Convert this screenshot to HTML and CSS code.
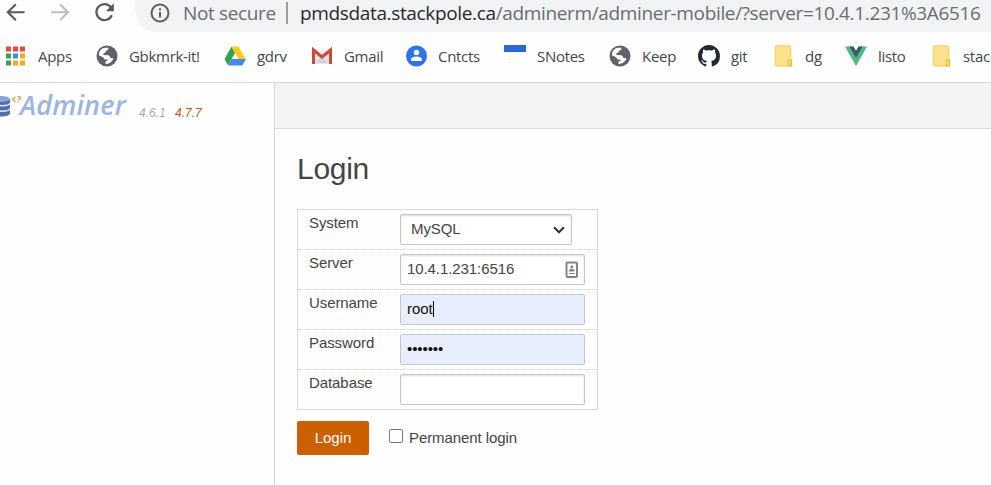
FILE: index.html
```html
<!DOCTYPE html>
<html lang="en">
<head>
<meta charset="utf-8">
<title>Login - Adminer</title>
<link rel="stylesheet" href="styles.css">
</head>
<body>
<svg width="0" height="0" class="defs">
  <symbol id="globe" viewBox="0 0 22 22"><circle cx="11" cy="11" r="10.500" fill="#5f6368"/><path d="M3 10.500C2.500 6.500 5.500 3.300 9 2.800L12.500 2.800C12.500 5 11.500 5.600 10 5.800C10 7.600 9 8 7.400 8.200L7.400 10L12.500 10.200C14 10.800 14 12 14.500 13L17.500 13.300C16.200 17 13 19.300 9.500 18.900L9.500 16.500L12 15.500C11 14.300 10 14.500 8.500 14.500C7.500 12.300 6.500 11.700 3 10.500Z" fill="#fff"/></symbol>
  <symbol id="folder" viewBox="0 0 22 22"><path d="M2.500 .8H15Q16.800 .8 16.800 2.500V14L17.800 15V21H2.500Q1.300 21 1.300 19.800V2Q1.300 .8 2.500 .8Z" fill="#fce28a" stroke="#efcf60"/><path d="M14.300 21V15H17.500V21Z" fill="#fbdc6c" stroke="#e3bc36"/></symbol>
</svg>
<header class="toolbar">
  <svg class="nav" viewBox="0 0 125 32" fill="none" stroke-width="2">
    <path d="M24.500 12.300H8M15.800 4.300L7.800 12.300L15.800 20.300" stroke="#55585c"/>
    <path d="M51 12.300H67.500M60 4.300L68 12.300L60 20.300" stroke="#bcbec0"/>
    <path d="M111 7.500A8 8 0 1 0 111.800 15.200" stroke="#55585c" stroke-width="2.200"/><path d="M113.800 3.300V11.200H106Z" fill="#55585c"/>
  </svg>
  <div class="address">
    <svg width="20" height="20" viewBox="0 0 20 20"><circle cx="10" cy="10" r="8.500" fill="none" stroke="#5f6368" stroke-width="2"/><path d="M10 9V14.500M10 5.300V7.400" stroke="#5f6368" stroke-width="2"/></svg>
    <span class="insecure">Not secure</span><i class="sep"></i>
    <span class="url"><b>pmdsdata.stackpole.ca</b>/adminerm/adminer-mobile/?server=10.4.1.231%3A6516</span>
  </div>
</header>
<nav class="bookmarks">
  <a><svg viewBox="0 0 22 22"><path d="M1 1.500h5v5H1zM8 1.500h5v5H8zM15 1.500h5v5h-5z" fill="#df4b3e"/><path d="M1 8.500h5v5H1zM1 15.500h5v5H1z" fill="#3f9e50"/><path d="M8 8.500h5v5H8z" fill="#4387f5"/><path d="M15 8.500h5v5h-5zM8 15.500h5v5H8zM15 15.500h5v5h-5z" fill="#edad18"/></svg><span>Apps</span></a>
  <a><svg><use href="#globe"/></svg><span>Gbkmrk-it!</span></a>
  <a><svg viewBox="0 0 22 22"><path d="M7.500 1.500L.5 14L4 20.500L11 8Z" fill="#31a354"/><path d="M7.500 1.500H14.500L21.500 14H14.500Z" fill="#fdcb15"/><path d="M7.700 14H22L18.300 20.500H4Z" fill="#4587f4"/></svg><span>gdrv</span></a>
  <a><svg viewBox="0 0 22 22"><path d="M2 4H20V19H2Z" fill="#e5e5e7"/><path d="M4 18L11 12L18 18Z" fill="#d3d4d6"/><path d="M2 4H20L11 11Z" fill="#f5f5f5"/><path d="M2.500 19V5L11 12L19.500 5V19" fill="none" stroke="#cd4939" stroke-width="3"/></svg><span>Gmail</span></a>
  <a><svg viewBox="0 0 22 22"><circle cx="11.500" cy="11" r="10.500" fill="#2d73e9"/><circle cx="11.500" cy="7.500" r="2.700" fill="#fff"/><path d="M6 16V14.500C6 12.500 8.500 11.500 11.500 11.500S17 12.500 17 14.500V16Z" fill="#fff"/></svg><span>Cntcts</span></a>
  <a><svg viewBox="0 0 22 22"><path d="M0 0H22V7H0Z" fill="#2868d5"/><path d="M4 11H18M4 14H16M4 17H15" stroke="#f3f4f6"/></svg><span>SNotes</span></a>
  <a><svg><use href="#globe"/></svg><span>Keep</span></a>
  <a><svg viewBox="0 0 16 16"><path fill="#24292e" d="M8 0C3.580 0 0 3.580 0 8c0 3.540 2.290 6.530 5.470 7.590.4.070.55-.17.55-.38 0-.19-.01-.82-.01-1.490-2.010.37-2.530-.49-2.690-.94-.09-.23-.48-.94-.82-1.130-.28-.15-.68-.52-.01-.53.63-.01 1.080.58 1.230.82.72 1.210 1.870.87 2.330.66.07-.52.28-.87.51-1.070-1.780-.2-3.640-.89-3.640-3.950 0-.87.31-1.590.82-2.150-.08-.2-.36-1.020.08-2.120 0 0 .67-.21 2.200.82.64-.18 1.320-.27 2-.27s1.360.09 2 .27c1.530-1.040 2.200-.82 2.200-.82.44 1.100.16 1.920.08 2.120.51.56.82 1.270.82 2.150 0 3.070-1.870 3.750-3.650 3.950.29.25.54.73.54 1.480 0 1.070-.01 1.930-.01 2.200 0 .21.15.46.55.38A8.010 8.010 0 0 0 16 8c0-4.420-3.580-8-8-8z"/></svg><span>git</span></a>
  <a><svg><use href="#folder"/></svg><span class="near">dg</span></a>
  <a><svg viewBox="0 0 22 22"><path d="M0 1.500H8L11 6L14 1.500H22L11 21Z" fill="#4dba87"/><path d="M4.500 1.500H8.500L11 6L13.500 1.500H17.500L11 12.800Z" fill="#435466"/></svg><span>listo</span></a>
  <a><svg><use href="#folder"/></svg><span class="near">stac</span></a>
</nav>
<div class="page">
  <aside>
    <svg class="db" width="23" height="24" viewBox="0 0 23 24"><path d="M-7 5V19.500C-7 23.500 10 23.500 10 19.500V5Z" fill="#526eaf"/><ellipse cx="1.500" cy="5" rx="8.500" ry="3" fill="#8ca5d6"/><path d="M-7 9C-7 12.500 10 12.500 10 9M-7 14.500C-7 18 10 18 10 14.500" fill="none" stroke="#e4eaf5" stroke-width="1.500"/><path d="M15.500 3L12.500 5.500L15.500 8M17.500 3.500Q20.500 1.500 20.500 4Q20 5.300 18.500 6M18 7.500V8.700" fill="none" stroke="#dfa15d" stroke-width="1.500"/></svg>
    <span class="brand">Adminer</span><span class="ver">4.6.1</span><span class="ver new">4.7.7</span>
  </aside>
  <main>
    <div class="crumb"></div>
    <form>
      <h1>Login</h1>
      <div class="fields">
        <div class="row"><label>System</label><div class="input select">MySQL<svg width="12" height="8" viewBox="0 0 12 8"><path d="M1 1.300L6 6.300L11 1.300" fill="none" stroke="#333" stroke-width="2"/></svg></div></div>
        <div class="row"><label>Server</label><div class="input">10.4.1.231:6516<svg class="card" width="14" height="18" viewBox="0 0 14 18"><rect x="1.500" y="1.500" width="10.500" height="14.500" rx="1" fill="#fff" stroke="#858585" stroke-width="2"/><circle cx="6.800" cy="6" r="1.400" fill="#858585"/><path d="M4 10.500V9Q6.800 6.500 9.500 9V10.500ZM4 12H9.500V13H4Z" fill="#858585"/></svg></div></div>
        <div class="row"><label>Username</label><div class="input filled">root<i class="caret"></i></div></div>
        <div class="row"><label>Password</label><div class="input filled">•••••••</div></div>
        <div class="row"><label>Database</label><div class="input"></div></div>
      </div>
      <div class="actions"><button type="button">Login</button><label><i class="check"></i>Permanent login</label></div>
    </form>
  </main>
</div>
</body>
</html>
```

FILE: styles.css
```css
* { box-sizing: border-box; }
body { margin: 0; width: 991px; height: 485px; overflow: hidden; background: #fefefe; font: 15px/20px "Liberation Sans", sans-serif; letter-spacing: -.08px; color: #444; }
svg { flex: none; display: block; }
.defs { position: absolute; }
.toolbar { display: flex; height: 32px; font-family: "Open Sans", sans-serif; }
.nav { width: 125px; height: 32px; }
.address { flex: 1; display: flex; align-items: center; margin-left: 10px; height: 32px; padding: 0 0 6px 15px; background: #f1f3f4; border-bottom-left-radius: 20px 24px; white-space: nowrap; font-size: 19px; color: #6a6d71; }
.insecure { width: 93px; margin-left: 13px; letter-spacing: -.35px; }
.sep { width: 2px; height: 22px; margin-left: 10px; background: #9a9c9f; }
.url { margin-left: 12px; letter-spacing: -.35px; }
.url b { font-weight: 400; color: #27292c; }
.bookmarks { display: grid; grid-template-columns: 91px 128px 87px 94px 99px 105px 89px 76px 71px 87px 60px; height: 51px; padding-left: 5px; border-bottom: 1px solid #d5d8dc; font: 15px/20px "Open Sans", sans-serif; letter-spacing: -.3px; color: #44474b; }
.bookmarks a { display: flex; gap: 11px; padding-top: 13px; white-space: nowrap; }
.bookmarks svg { width: 22px; height: 22px; }
.bookmarks span { padding-top: 1px; }
.bookmarks .near { margin-left: -2px; }
.page { display: flex; height: 402px; }
aside { display: flex; align-items: flex-start; width: 275px; padding-top: 11px; border-right: 1px solid #d5d7da; }
.brand { width: 116px; margin: -1px 0 0 -3px; font: italic 600 27px/24px "Open Sans", sans-serif; letter-spacing: .2px; color: #9db5de; }
.ver { width: 36px; margin: 9px 0 0 3px; font: italic 12px/20px "Liberation Sans", sans-serif; letter-spacing: 0; color: #aaa; }
.ver.new { margin-left: 0; color: #b45b13; }
main { flex: 1; }
.crumb { height: 46px; background: #f1f3f5; border-bottom: 1px solid #d9dbde; }
form { padding: 22px 0 0 22px; }
h1 { margin: 0; height: 58px; font-size: 30px; line-height: 36px; font-weight: 400; letter-spacing: -.3px; }
.fields { width: 301px; height: 201px; border: 1px solid #d8d8d8; }
.row { display: flex; height: 40px; padding: 4px 0 0 11px; border-bottom: 1px dotted #d0d0d0; }
.row:last-child { border-bottom: 0; }
.row label { width: 91px; line-height: 17px; }
.input { display: flex; align-items: center; width: 185px; height: 31px; padding: 0 5px 2px 6px; border: 1px solid #c6c6c8; border-radius: 2px; background: #fff; box-shadow: inset 0 1px 2px #ddd; }
.select { width: 172px; padding-left: 10px; padding-right: 6px; }
.select svg { margin: 2px 0 0 auto; }
.card { margin: 3px 0 0 auto; }
.filled { background: #e8eefe; box-shadow: none; color: #111; }
.caret { width: 1px; height: 16px; background: #000; }
.actions { display: flex; margin-top: 11px; }
button { width: 72px; height: 34px; padding: 0 0 2px; border: 0; border-radius: 2px; background: #cc5f00; color: #fff; font: 15px "Liberation Sans", sans-serif; }
.actions label { display: flex; margin: 8px 0 0 20px; line-height: 17px; }
.check { width: 14px; height: 14px; margin-right: 6px; border: 1px solid #777; border-radius: 2px; background: #fff; }
```
